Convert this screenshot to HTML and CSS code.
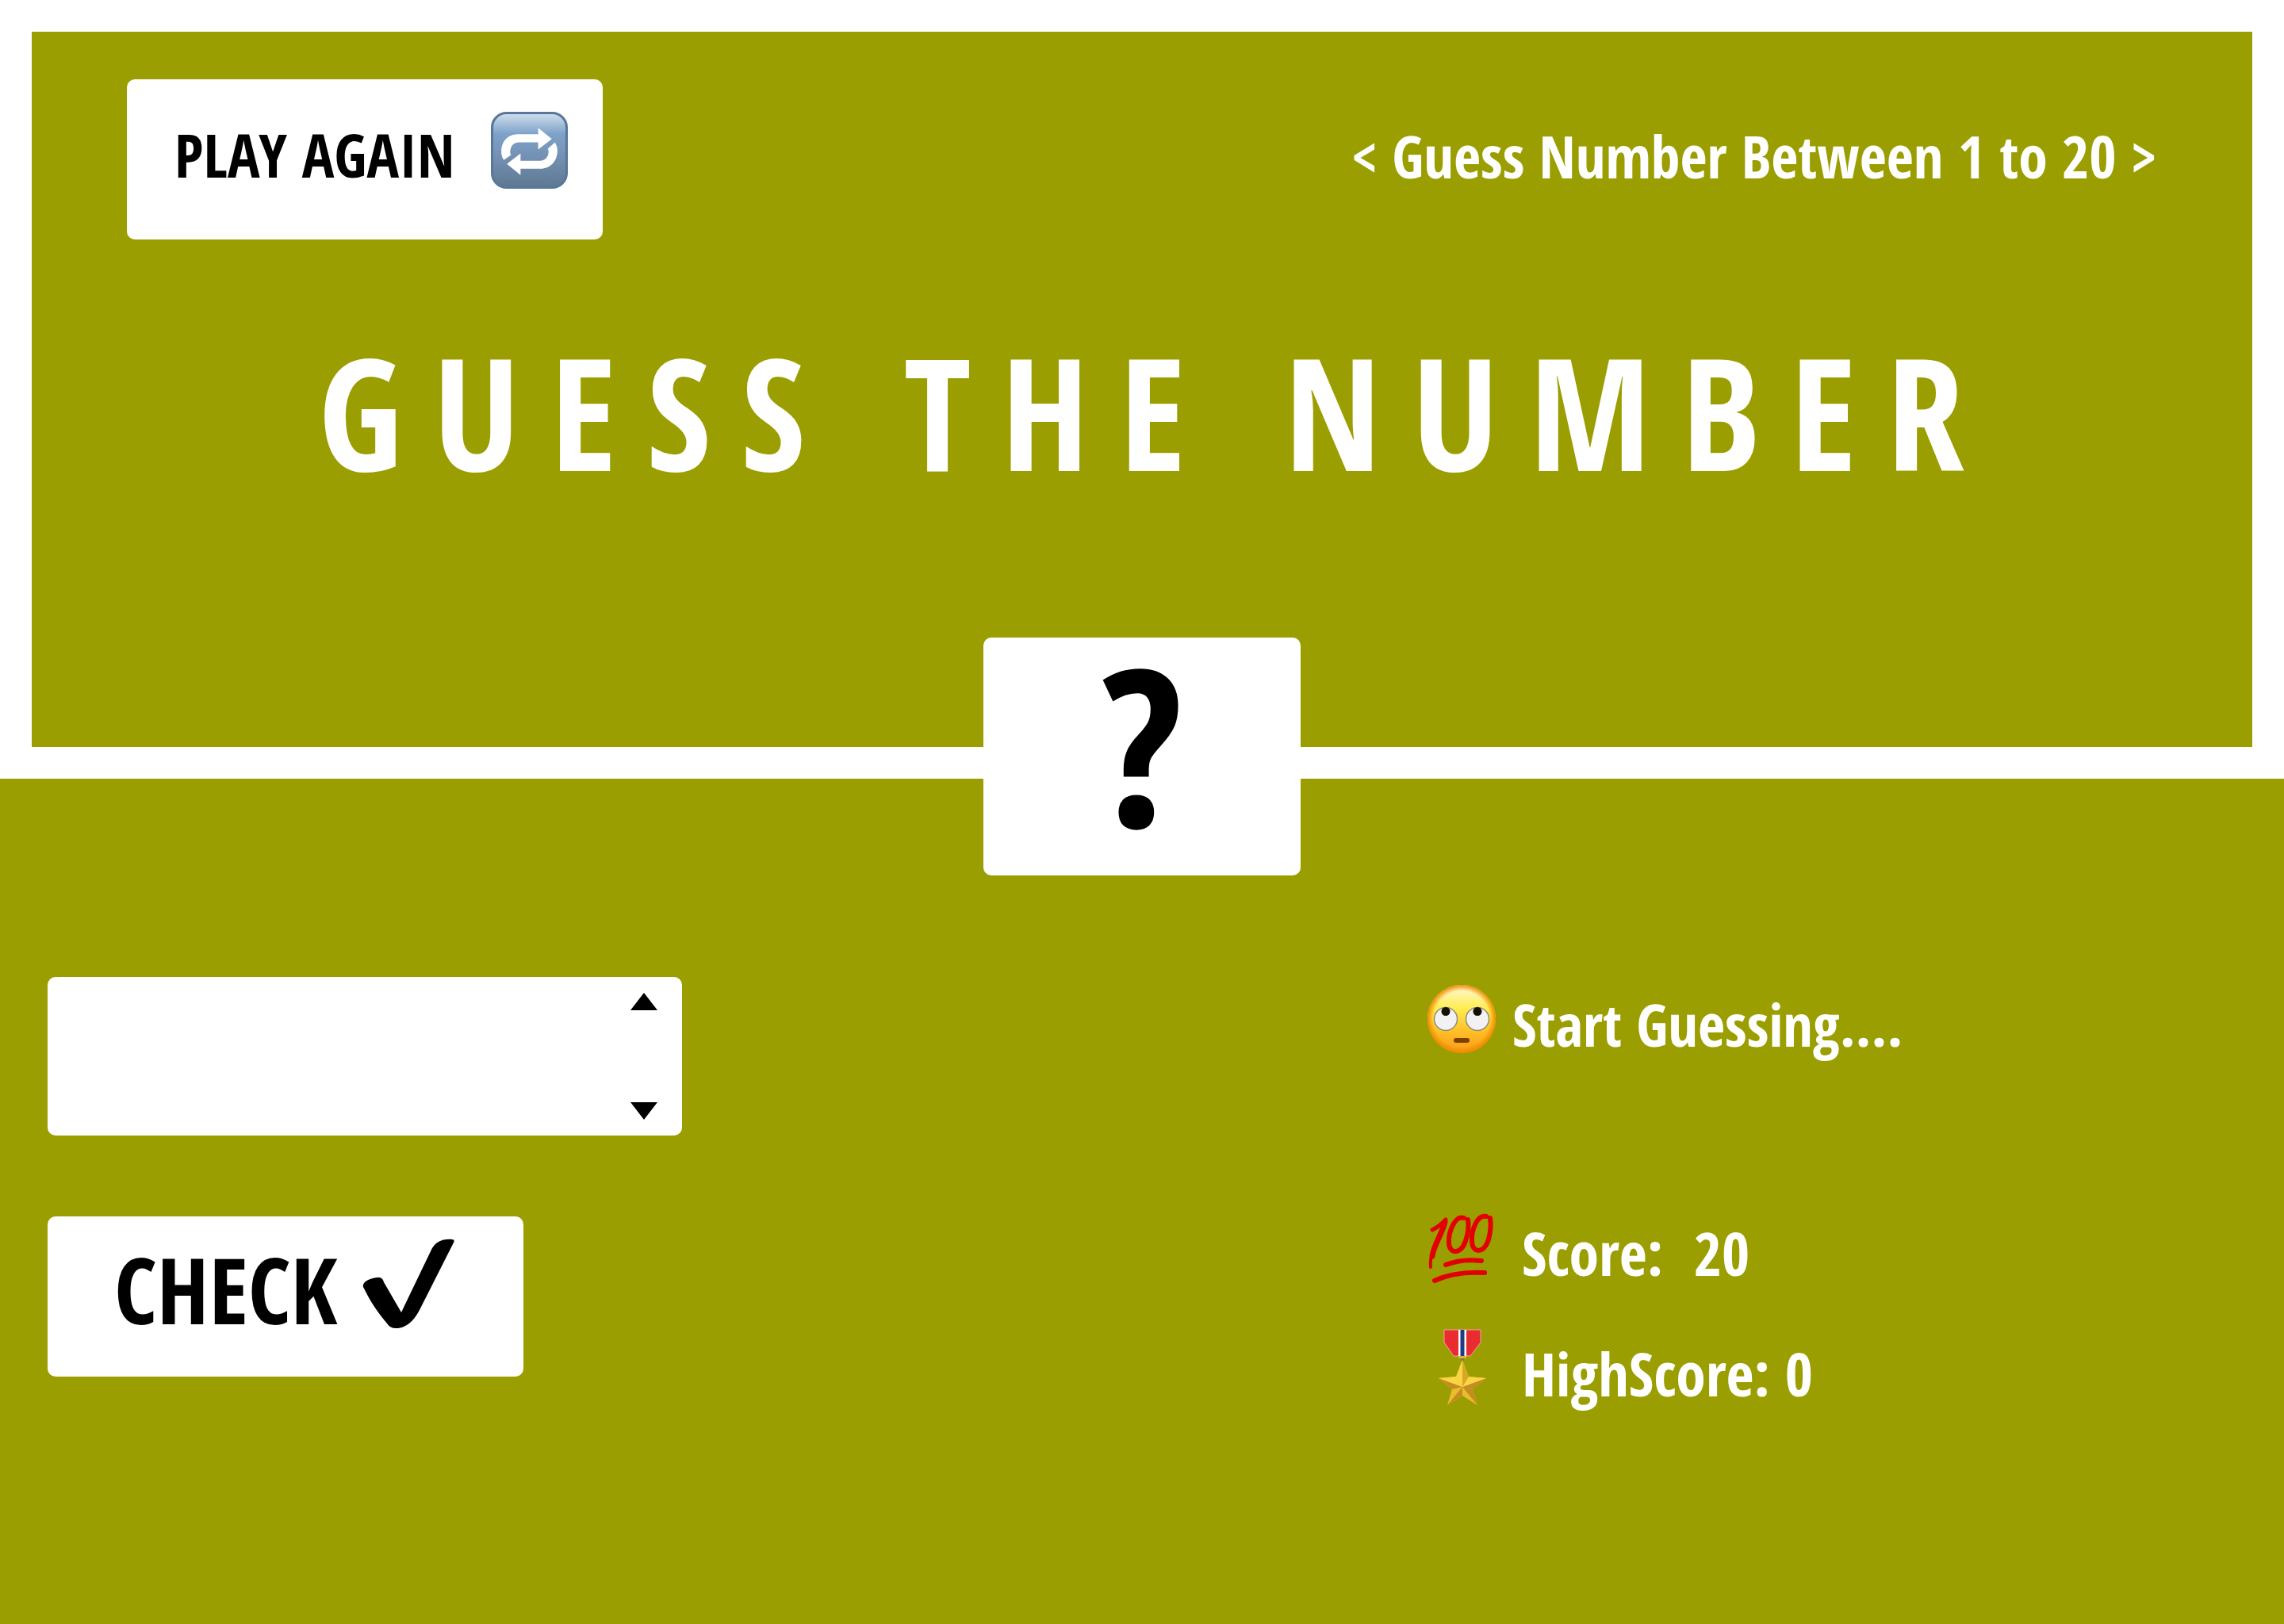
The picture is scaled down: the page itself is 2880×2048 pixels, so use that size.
FILE: index.html
```html
<!DOCTYPE html>
<html lang="en">
<head>
<meta charset="utf-8">
<title>Guess The Number</title>
<link rel="stylesheet" href="styles.css">
</head>
<body>
<header class="hero">
  <div class="topbar">
    <button class="btn again" type="button"><span>PLAY AGAIN</span>
      <svg class="icon-repeat" viewBox="0 0 96 96" aria-hidden="true">
        <defs><linearGradient id="tile" x1="0" y1="0" x2="0" y2="1"><stop offset="0" stop-color="#d3e0ee"/><stop offset=".28" stop-color="#7ea2c9"/><stop offset=".6" stop-color="#7390b3"/><stop offset="1" stop-color="#5d7891"/></linearGradient></defs>
        <rect x="1.500" y="1.500" width="93" height="93" rx="18" fill="url(#tile)" stroke="#58779a" stroke-width="3"/>
        <g fill="#fff"><path d="M13 50C13 36 22 28 34 28H59V20L76 34L59 47V38H35C28 38 24 43 24 51L25 54L16 60Q13 56 13 50Z"/><path d="M83 48C83 62 74 71 62 71H37V79L20 65L37 52V61H61C68 61 72 56 72 49L71 46L80 38Q83 43 83 48Z"/></g>
      </svg>
    </button>
    <p class="between">&lt; Guess Number Between 1 to 20 &gt;</p>
  </div>
  <h1 class="title">GUESS THE NUMBER</h1>
  <div class="secret">?</div>
</header>
<main class="game">
  <form class="guess-form">
    <div class="field">
      <input class="guess" type="number" aria-label="Your guess">
      <span class="stepper">
        <button class="step" type="button" aria-label="Increase"><svg viewBox="0 0 36 22"><path d="M18 0L35 22H1Z"/></svg></button>
        <button class="step" type="button" aria-label="Decrease"><svg viewBox="0 0 36 22"><path d="M1 0H35L18 22Z"/></svg></button>
      </span>
    </div>
    <button class="btn check" type="button"><span>CHECK</span>
      <svg class="icon-check" viewBox="0 0 116 114" aria-hidden="true"><path d="M1 61C-1 55 10 49 20 49C24 49 26 51 27 55L49 93L86 16C91 4 101 0 113 1Q117 1 115 5L72 90C65 104 55 113 42 113Q35 113 31 107C18 91 11 81 1 61Z"/></svg>
    </button>
  </form>
  <section class="status">
    <p class="line message">
      <svg class="icon" viewBox="0 0 96 96" aria-hidden="true">
        <defs><linearGradient id="face" x1="0" y1="0" x2="0" y2="1"><stop offset="0" stop-color="#fff9dc"/><stop offset=".35" stop-color="#ffed4d"/><stop offset=".7" stop-color="#ffbd25"/><stop offset="1" stop-color="#f99a16"/></linearGradient>
        <radialGradient id="rim"><stop offset=".82" stop-color="#f08a00" stop-opacity="0"/><stop offset="1" stop-color="#f08a00"/></radialGradient></defs>
        <circle cx="48" cy="49" r="43" fill="url(#face)"/><circle cx="48" cy="49" r="43" fill="url(#rim)"/>
        <g fill="#f2f2f4" stroke="#8d8a80" stroke-width="1.500"><circle cx="28" cy="49" r="14.500"/><circle cx="68" cy="49" r="14.500"/></g>
        <g fill="#151000"><ellipse cx="28" cy="39.500" rx="5.500" ry="5.500"/><ellipse cx="68" cy="39.500" rx="5.500" ry="5.500"/></g>
        <rect x="38" y="73" width="20" height="6" rx="3" fill="#7c4100"/>
      </svg>
      <span class="label">Start Guessing....</span>
    </p>
    <p class="line score">
      <svg class="icon" viewBox="0 0 96 96" aria-hidden="true">
        <g fill="none" stroke="#e20000" stroke-linecap="round" stroke-linejoin="round"><path stroke-width="5" d="M11 27Q21 22 28 14"/><path stroke-width="7" d="M27 17C22 35 13 46 11 60"/><path stroke-width="4" d="M11 58Q8 65 9 74"/><path stroke-width="6" d="M51 12C39 8 31 31 32 44C33 58 47 58 53 41Q58 26 56 14"/><path stroke-width="6" d="M79 10C67 7 60 29 61 42C62 57 76 57 82 39Q86 24 84 12"/><path stroke-width="6" d="M28 71Q48 63 73 66M14 91Q39 79 77 81"/></g>
      </svg>
      <span class="label">Score:&nbsp; <output>20</output></span>
    </p>
    <p class="line score">
      <svg class="icon" viewBox="0 0 96 96" aria-hidden="true">
        <path fill="#e92c30" stroke="#f6a0a0" stroke-width="1" d="M26 1H72V17L59 34H38L26 17Z"/><path fill="#fff" d="M44 1H54V34H44Z"/><path fill="#213a85" d="M46.500 1H51.500V34H46.500Z"/>
        <path fill="#dfb529" d="M44 34H54V37H44Z"/><path fill="#777" d="M47 37H51V40H47Z"/>
        <path fill="#e9bd2b" d="M49 39L57 60L79 62L62 76L68 96L49 84L30 96L36 76L19 62L41 60Z"/>
        <g fill="#c48c22"><path d="M49 73L62 76L68 96Z"/><path d="M49 73V84L30 96Z"/><path d="M49 73L36 76L19 62Z"/><path d="M49 73L79 62L62 76Z"/></g>
        <g fill="#f8d544"><path d="M49 73L41 60L19 62Z"/><path d="M49 73L79 62L57 60Z"/><path d="M49 39V73L41 60Z"/></g><path d="M49 39L57 60L49 73Z" fill="#d8a825"/>
      </svg>
      <span class="label">HighScore: <output>0</output></span>
    </p>
  </section>
</main>
</body>
</html>
```
FILE: styles.css
```css
* { box-sizing: border-box; }

body {
  margin: 0;
  min-height: 100vh;
  background: #9b9e00;
  color: #fff;
  font-family: "Open Sans Condensed", "Roboto Condensed", "Liberation Sans Narrow", sans-serif;
  font-size: 76px;
  font-weight: 700;
  line-height: 96px;
}

p, h1 { margin: 0; }
svg { display: block; flex: none; }

button, input {
  border: 0;
  font: inherit;
  color: #000;
}

.hero {
  position: relative;
  border: 40px solid #fff;
  padding: 60px 120px 320px;
}

.topbar {
  display: flex;
  justify-content: space-between;
  align-items: center;
}

.btn {
  display: flex;
  align-items: center;
  height: 202px;
  width: 600px;
  border-radius: 10px;
  background: #fff;
  white-space: nowrap;
}

.btn span { padding-top: 12px; }

.again {
  justify-content: space-between;
  padding: 0 44px 24px 60px;
}

.icon-repeat { width: 97px; height: 97px; }

.between {
  padding-bottom: 8px;
  font-size: 74px;
}

.title {
  padding: 112px 0 0 36px;
  font-size: 196px;
  line-height: 208px;
  letter-spacing: 38px;
  text-align: center;
  white-space: nowrap;
}

.secret {
  position: absolute;
  left: 50%;
  bottom: -162px;
  width: 400px;
  height: 300px;
  transform: translateX(-50%);
  border-radius: 10px;
  background: #fff;
  color: #000;
  font-size: 276px;
  line-height: 264px;
  text-align: center;
}

.game {
  display: grid;
  grid-template-columns: 1fr 1085px;
  padding: 250px 0 0 60px;
}

.guess-form {
  display: flex;
  flex-direction: column;
  gap: 102px;
}

.field {
  position: relative;
  width: 800px;
}

.guess {
  display: block;
  width: 100%;
  height: 200px;
  padding: 0 100px 0 40px;
  border-radius: 10px;
  background: #fff;
  appearance: textfield;
}

.guess::-webkit-inner-spin-button { display: none; }

.stepper {
  position: absolute;
  top: 20px;
  right: 30px;
  bottom: 20px;
  display: flex;
  flex-direction: column;
  justify-content: space-between;
}

.step { padding: 0; background: none; }
.step svg { width: 36px; height: 22px; }

.check {
  justify-content: space-between;
  padding: 0 87px 32px 84px;
  font-size: 116px;
}

.icon-check { width: 116px; height: 114px; }

.status { padding-top: 4px; }

.line {
  display: flex;
  align-items: center;
  gap: 16px;
  margin-bottom: 56px;
}

.message {
  margin-bottom: 192px;
  font-size: 74px;
}

.score { gap: 28px; }
.icon { width: 96px; height: 96px; }
.label { padding-top: 8px; margin-bottom: -8px; }
```
